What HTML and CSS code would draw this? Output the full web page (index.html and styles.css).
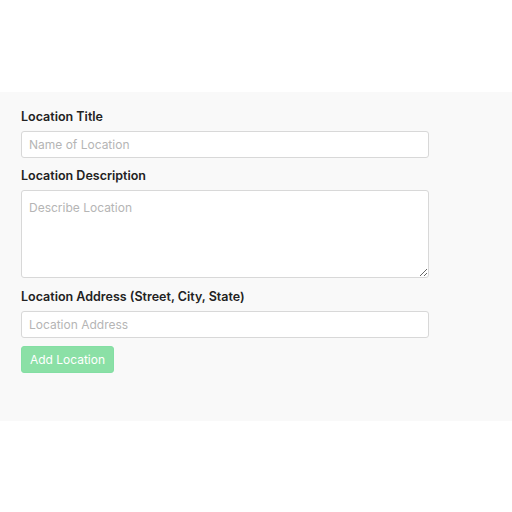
FILE: index.html
```html
<!DOCTYPE html>
<html>
<head>
<meta charset="utf-8">
<link rel="stylesheet" href="styles.css">
</head>
<body>
<div class="top"></div>
<form class="panel">
  <label class="lbl">Location Title</label>
  <input class="field" type="text" placeholder="Name of Location">
  <label class="lbl">Location Description</label>
  <textarea class="field area" placeholder="Describe Location"></textarea>
  <label class="lbl">Location Address (Street, City, State)</label>
  <input class="field last" type="text" placeholder="Location Address">
  <button class="btn" type="button">Add Location</button>
</form>
</body>
</html>
```
FILE: styles.css
```css
html, body { margin: 0; padding: 0; background: #fff; }
body { font-family: Inter, "Helvetica Neue", Arial, sans-serif; }
.top { height: 92px; }
.panel {
  background: #f9f9f9;
  height: 329px;
  box-sizing: border-box;
  padding: 17px 0 0 21px;
  display: flex;
  flex-direction: column;
  align-items: flex-start;
}
.lbl {
  font-size: 12.5px;
  font-weight: 600;
  color: #222;
  line-height: 16px;
  margin-bottom: 6px;
}
.field {
  display: block;
  box-sizing: border-box;
  width: 408px;
  height: 27px;
  margin: 0 0 10px 0;
  padding: 0 7px;
  border: 1px solid #d8d8d8;
  border-radius: 3px;
  background: #fff;
  font-family: inherit;
  font-size: 12px;
  color: #333;
  outline: none;
}
.field::placeholder { color: #b5b5b5; }
.area {
  height: 88px;
  padding: 9px 7px;
  resize: vertical;
  margin-bottom: 11px;
}
.field.last { margin-bottom: 8px; }
.btn {
  box-sizing: border-box;
  height: 27px;
  width: 93px;
  padding: 0;
  border: 1px solid #84dfa4;
  border-radius: 3px;
  background: #8be0a6;
  color: #fff;
  font-family: inherit;
  font-size: 12px;
}
```
